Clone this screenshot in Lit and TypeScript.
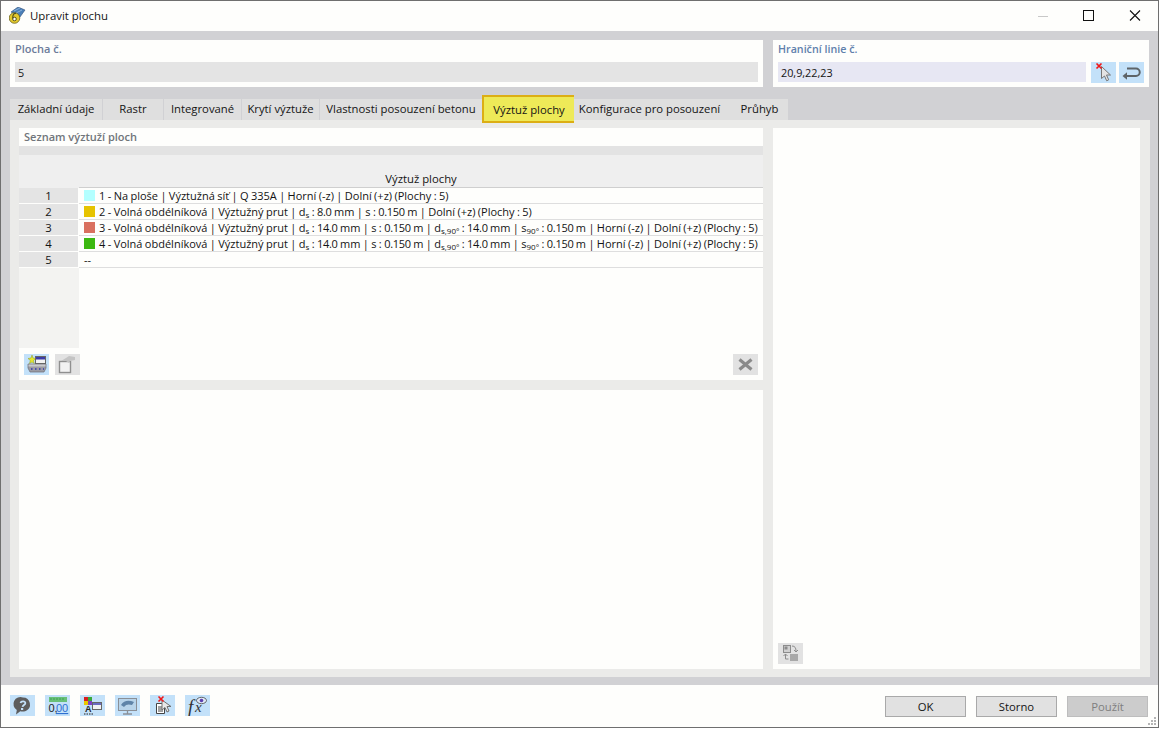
import { LitElement, html, css, svg } from 'lit';
import { customElement } from 'lit/decorators.js';

const TABS = [
  ['Základní údaje', 93],
  ['Rastr', 61],
  ['Integrované', 78],
  ['Krytí výztuže', 78],
  ['Vlastnosti posouzení betonu', 162],
  ['Výztuž plochy', 92],
  ['Konfigurace pro posouzení', 157],
  ['Průhyb', 57],
] as const;
const ACTIVE_TAB = 5;

const sub = (t: string) => html`<sub>${t}</sub>`;
// digits of the reference font run narrower than ours
const n = (t: string) => html`<span class="n">${t}</span>`;
const ROWS = [
  { color: '#b3ffff', text: html`1 - Na ploše | Výztužná síť | Q 335A | Horní (-z) | Dolní (+z) (Plochy : 5)` },
  { color: '#e6c300', text: html`2 - Volná obdélníková | Výztužný prut | d${sub('s')} : ${n('8.0')} mm | s : ${n('0.150')} m | Dolní (+z) (Plochy : 5)` },
  { color: '#d9705f', text: html`3 - Volná obdélníková | Výztužný prut | d${sub('s')} : ${n('14.0')} mm | s : ${n('0.150')} m | d${sub('s,90°')} : ${n('14.0')} mm | s${sub('90°')} : ${n('0.150')} m | Horní (-z) | Dolní (+z) (Plochy : 5)` },
  { color: '#3cb810', text: html`4 - Volná obdélníková | Výztužný prut | d${sub('s')} : ${n('14.0')} mm | s : ${n('0.150')} m | d${sub('s,90°')} : ${n('14.0')} mm | s${sub('90°')} : ${n('0.150')} m | Horní (-z) | Dolní (+z) (Plochy : 5)` },
  { color: '', text: html`--` },
];

const ICONS: Record<string, unknown> = {
  help: svg`<path d="M13 2.500a7 7 0 0 1 2.800 13.400c-2 .8-4 .7-5.500.4L6 19.500l.8-4.500A7 7 0 0 1 13 2.500z" fill="#5d5d5d"/>
    <path d="M10.500 8c.5-2.200 5.200-2.200 4.800.3-.3 1.700-2.500 1.700-2.800 3.500" fill="none" stroke="#c4e1f9" stroke-width="1.800"/>
    <rect x="11" y="13" width="2.200" height="2" fill="#c4e1f9"/>`,
  units: svg`<rect x="4" y="2" width="18" height="5" fill="#68c078"/>
    <path d="M6 3v2M9 3v2M12 3v2M15 3v2M18 3v2" stroke="#3f9f55"/>
    <text x="3.500" y="17" font-size="11" font-family="Liberation Sans, sans-serif" fill="#222">0,</text>
    <text x="11" y="17" font-size="11" font-family="Liberation Sans, sans-serif" fill="#2e6fd0" text-decoration="underline">00</text>`,
  display: svg`<rect x="4" y="2" width="4" height="4" fill="#d92020"/><rect x="8" y="2" width="4" height="4" fill="#3aa83a"/>
    <rect x="4" y="6" width="4" height="4" fill="#e8c800"/><rect x="8" y="6" width="4" height="4" fill="#8040c0"/>
    <text x="5" y="17" font-size="9" font-weight="700" font-family="Liberation Sans, sans-serif" fill="#222">A</text>
    <path d="M4 19h9" stroke="#222" stroke-dasharray="1.500 1"/>
    <rect x="12.500" y="7.500" width="9" height="7" fill="#f2f2f2" stroke="#666"/><rect x="13" y="8" width="8" height="2" fill="#6a6ac0"/>`,
  view: svg`<rect x="3.500" y="3.500" width="18" height="12" fill="#b8d4ea" stroke="#8a8f96"/>
    <path d="M6 10c3-5 8-5 13-3l-2 3c-3-1-6-1-8 2z" fill="#5f84a8"/>
    <path d="M12.500 15.500v3M8 19h9" stroke="#8a8f96" stroke-width="1.300"/>`,
  select: svg`<path d="M6.500 8.500h6l2 2v8h-8z" fill="#fff" stroke="#444"/><path d="M8 12h5M8 14h5M8 16h5" stroke="#444"/>
    <path d="M12 5l0 10 3-2.500 2 4.500 2-1-2-4.500 4 0z" fill="#e8e8e8" stroke="#707070"/>
    <path d="M8.500 1.500l5 5M13.500 1.500l-5 5" stroke="#f01818" stroke-width="1.600"/>`,
  formula: svg`<text x="3" y="18" font-size="19" font-style="italic" font-family="Liberation Serif, serif" fill="#333">f</text>
    <text x="10" y="17" font-size="15" font-style="italic" font-family="Liberation Serif, serif" fill="#333">x</text>
    <ellipse cx="16.500" cy="5.500" rx="5" ry="3.200" fill="#dfe8f5" stroke="#444" stroke-width=".8"/><circle cx="16.500" cy="5.500" r="1.800" fill="#5a3fb0"/>`,
  pick: svg`<path d="M10.500 4.500v12l3-2.500 2.200 4.800 2-1-2.200-4.800h4z" fill="#e4e4e4" stroke="#767676"/>
    <path d="M5.500 1.500l5 5M10.500 1.500l-5 5" stroke="#f01818" stroke-width="1.700"/>`,
  back: svg`<path d="M8 6.500h9a3.700 3.700 0 0 1 0 7.500H7" fill="none" stroke="#5e6468" stroke-width="2"/>
    <path d="M3.500 14l4.500-3.700v7.400z" fill="#5e6468"/>`,
  add: svg`<path d="M4 10h18v4l-2 4H6l-2-4z" fill="#9b9ba3" stroke="#6c6c72" stroke-width=".7"/>
    <rect x="4.500" y="10.500" width="17" height="2" fill="#c8c8cc"/>
    <path d="M7 15h1.500M11 15h1.500M15 15h1.500M19 15h1" stroke="#3535b0" stroke-width="1.500"/>
    <path d="M8 1l1 3 3 .5-2.500 2 .8 3L8 8l-2.500 1.500.8-3L4 4.500 7 4z" fill="#e6e62e" stroke="#8a9a20" stroke-width=".5"/>
    <rect x="11.500" y="2.500" width="10" height="7" fill="#f2f2f2" stroke="#666"/><rect x="12" y="3" width="9" height="2.500" fill="#3c3ca8"/>`,
  copy: svg`<rect x="4.500" y="7.500" width="11" height="11" fill="#f2f2f2" stroke="#8f8f8f" stroke-width="1.400"/>
    <path d="M6 7l5-3 3-2 6 1 0 3-5 1-1 2-3-2z" fill="#c4c4c4"/>`,
  del: svg`<path d="M6.500 5.500l12 10M18.500 5.500l-12 10" stroke="#8a8a8a" stroke-width="3.200"/>`,
  swap: svg`<rect x="5.500" y="2.500" width="7" height="7" fill="#d0d0d0" stroke="#8c8c8c"/><rect x="6.500" y="3.500" width="3" height="3" fill="#8c8c8c"/>
    <rect x="12" y="11" width="8" height="7" fill="#a8a8a8"/>
    <path d="M14 3c3 0 4 2 4 5M16 7l2 2 2-2M7.500 11v5h3M5.500 13l2-2 2 2" fill="none" stroke="#8c8c8c"/>`,
};

const icon = (name: string, disabled = false) => html`
  <button class="icon ${disabled ? 'off' : ''}"><svg width="25" height="21" viewBox="0 0 25 21">${ICONS[name]}</svg></button>`;

@customElement('app-root')
export class AppRoot extends LitElement {
  static styles = css`
    :host {
      display: block;
      font-family: "Open Sans", "Noto Sans", sans-serif;
      font-size: 11.3px;
      color: #141414;
    }
    .window {
      box-sizing: border-box;
      width: 1159px;
      height: 728px;
      border: 1px solid #6f6f6f;
      display: flex;
      flex-direction: column;
      background: #fefefc;
      position: relative;
    }
    .title {
      height: 30px;
      display: flex;
      align-items: center;
      padding-left: 8px;
      font-size: 11.4px;
      gap: 3px;
    }
    .title .caption { flex: 1; padding-bottom: 1px; }
    .winbtns { display: flex; height: 30px; }
    .winbtns svg { display: block; }
    .body {
      flex: 1;
      background: #d1d1d4;
      padding: 9px 8px 8px 9px;
      display: flex;
      flex-direction: column;
    }
    .top { display: flex; gap: 10px; height: 47px; }
    .card {
      background: #fefefc;
      padding: 2px 5px 0;
      box-sizing: border-box;
    }
    .card.left { width: 753px; }
    .card.right { width: 376px; }
    .label {
      height: 20px;
      line-height: 14px;
      font-weight: 600;
      font-size: 11px;
      color: #6c7b9a;
    }
    .right .label { color: #5f80ac; font-size: 10.7px; }
    .field-row { display: flex; }
    .field {
      flex: 1;
      height: 20px;
      line-height: 21px;
      padding-left: 3px;
      font-size: 10.8px;
      background: #e4e4e4;
    }
    .right .field { background: #e7e7f3; margin-right: 5px; }
    .right .icon + .icon { margin-left: 3px; }
    .tabs { display: flex; height: 21px; margin-top: 12px; }
    .tab {
      box-sizing: border-box;
      height: 21px;
      line-height: 20px;
      text-align: center;
      background: #dfdfdf;
      border-right: 1px solid #d1d1d4;
      white-space: nowrap;
    }
    .tab:nth-child(7) { padding-right: 6px; }
    .tab.on {
      height: 28px;
      margin-top: -4px;
      line-height: 25px;
      background: #eeea58;
      border: 2px solid #dcae14;
      position: relative;
      z-index: 1;
    }
    .tab.plain { border-right: none; }
    .panel {
      flex: 1;
      background: #ebebe9;
      padding: 8px 9px;
      display: grid;
      grid-template-columns: 744px 367px;
      grid-template-rows: 252px 279px;
      column-gap: 10px;
      row-gap: 10px;
    }
    .box { background: #fefefc; min-width: 0; }
    .side {
      grid-column: 2;
      grid-row: 1 / 3;
      display: flex;
      flex-direction: column;
      justify-content: flex-end;
      padding: 0 0 5px 5px;
      box-sizing: border-box;
    }
    .list { display: flex; flex-direction: column; }
    .list-title {
      height: 18px;
      line-height: 18px;
      padding-left: 5px;
      font-weight: 600;
      font-size: 11px;
      color: #70757a;
    }
    .band { height: 9px; background: #e3e3e3; }
    .table {
      display: grid;
      grid-template-columns: 60px minmax(0, 1fr);
      grid-template-rows: 33px repeat(5, 16px) 1fr;
      height: 193px;
      background: linear-gradient(#f3f3f1, #f3f3f1) left / 60px 100% no-repeat;
    }
    .head { background: #efefef; }
    .head.name {
      box-sizing: border-box;
      text-align: center;
      line-height: 48px;
      border-bottom: 1px solid #cfcfcf;
      overflow: hidden;
    }
    .num {
      box-sizing: border-box;
      background: #e4e4e4;
      border-bottom: 1px solid #fefefc;
      border-right: 1px solid #fefefc;
      text-align: center;
      line-height: 15px;
    }
    .cell {
      box-sizing: border-box;
      border-bottom: 1px solid #dedede;
      padding-left: 5px;
      display: flex;
      align-items: center;
      white-space: nowrap;
      background: #fefefc;
      font-size: 11px;
      word-spacing: -0.45px;
    }
    .swatch { width: 11px; height: 11px; margin-right: 4px; flex: none; }
    .cell .t { line-height: 14px; }
    .n { letter-spacing: -0.3px; }
    sub { font-size: 8px; line-height: 0; vertical-align: -2px; word-spacing: 0; }
    .tools {
      display: flex;
      gap: 6px;
      padding: 6px 5px 0;
    }
    .tools .grow { flex: 1; }
    .icon {
      width: 25px;
      height: 21px;
      padding: 0;
      border: 0;
      background: #c3e1f9;
      display: block;
      flex: none;
    }
    .icon.off { background: #e2e2e2; }
    .icon svg { display: block; }
    .footer {
      height: 42px;
      display: flex;
      align-items: flex-start;
      padding: 10px 10px 0 9px;
      box-sizing: border-box;
    }
    .footer .left-icons { display: flex; gap: 10px; flex: 1; }
    .btn {
      box-sizing: border-box;
      width: 81px;
      height: 21px;
      margin: 1px 0 0 10px;
      background: #e1e1e1;
      border: 1px solid #a9a9a9;
      font: inherit;
      color: #141414;
      padding: 0;
    }
    .btn.off { background: #cccccc; color: #7f7f7f; border-color: #bdbdbd; }
    .grip { position: absolute; right: 1px; bottom: 1px; display: block; }
  `;

  render() {
    return html`
      <div class="window">
        <div class="title">
          <svg width="18" height="18" viewBox="0 0 18 18">
            <path d="M2 5l7-5 7 3-5 7-5-3z" fill="#4a7fb8" stroke="#2f4f78" stroke-width=".6"/>
            <path d="M5 4l6-3M7 6l6-3" stroke="#a8c8e8" stroke-width=".7"/>
            <circle cx="5.500" cy="11" r="5.300" fill="#e3c92c" stroke="#6b6320" stroke-width=".8"/>
            <circle cx="5.500" cy="12" r="1.800" fill="#fefefc" stroke="#54501c"/>
            <path d="M7 6.500c-2-.5-3.300.8-3.300 5" fill="none" stroke="#54501c" stroke-width="1.200"/>
          </svg>
          <span class="caption">Upravit plochu</span>
          <div class="winbtns">
            <svg width="46" height="30" viewBox="0 0 46 30"><path d="M18 15.500h10" stroke="#c8c8c8"/></svg>
            <svg width="46" height="30" viewBox="0 0 46 30"><rect x="17.500" y="9.500" width="10" height="10" fill="none" stroke="#111"/></svg>
            <svg width="46" height="30" viewBox="0 0 46 30"><path d="M18 9.500l10 10M28 9.500l-10 10" stroke="#111" stroke-width="1.100"/></svg>
          </div>
        </div>
        <div class="body">
          <div class="top">
            <div class="card left">
              <div class="label">Plocha č.</div>
              <div class="field">5</div>
            </div>
            <div class="card right">
              <div class="label">Hraniční linie č.</div>
              <div class="field-row">
                <div class="field">20,9,22,23</div>
                ${icon('pick')}${icon('back')}
              </div>
            </div>
          </div>
          <div class="tabs">
            ${TABS.map(([name, w], i) => html`
              <div class="tab ${i === ACTIVE_TAB ? 'on' : ''} ${i >= ACTIVE_TAB - 1 ? 'plain' : ''}" style="width:${w}px">${name}</div>`)}
          </div>
          <div class="panel">
            <div class="box list">
              <div class="list-title">Seznam výztuží ploch</div>
              <div class="band"></div>
              <div class="table">
                <div class="head"></div>
                <div class="head name">Výztuž plochy</div>
                ${ROWS.map((r, i) => html`
                  <div class="num">${i + 1}</div>
                  <div class="cell">
                    ${r.color ? html`<span class="swatch" style="background:${r.color}"></span>` : ''}
                    <span class="t">${r.text}</span>
                  </div>`)}
              </div>
              <div class="tools">
                ${icon('add')}${icon('copy', true)}
                <span class="grow"></span>
                ${icon('del', true)}
              </div>
            </div>
            <div class="box side">${icon('swap', true)}</div>
            <div class="box"></div>
          </div>
        </div>
        <div class="footer">
          <div class="left-icons">
            ${icon('help')}${icon('units')}${icon('display')}${icon('view')}${icon('select')}${icon('formula')}
          </div>
          <button class="btn">OK</button>
          <button class="btn">Storno</button>
          <button class="btn off">Použít</button>
        </div>
        <svg class="grip" width="10" height="10" viewBox="0 0 10 10" fill="#b4b4b4">
          <rect x="7" y="1" width="2" height="2"/><rect x="4" y="4" width="2" height="2"/><rect x="7" y="4" width="2" height="2"/>
          <rect x="1" y="7" width="2" height="2"/><rect x="4" y="7" width="2" height="2"/><rect x="7" y="7" width="2" height="2"/>
        </svg>
      </div>
    `;
  }
}
